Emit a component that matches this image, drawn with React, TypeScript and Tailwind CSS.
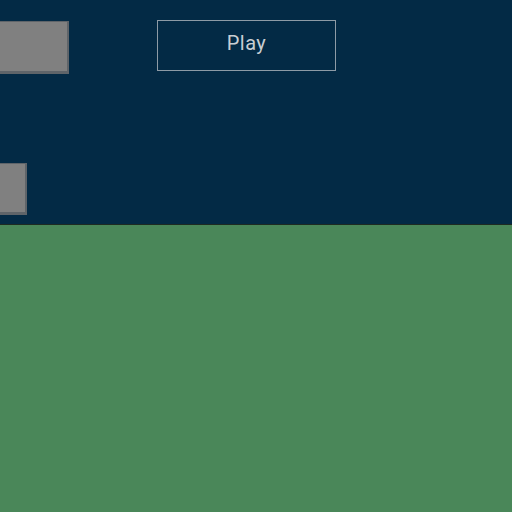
export default function App() {
  return (
    <div className="flex h-[512px] w-[512px] flex-col overflow-hidden" style={{ fontFamily: 'Roboto, "Liberation Sans", sans-serif' }}>
      {/* Top panel */}
      <div className="flex h-[224px] flex-col bg-[#032a45] pt-[20px]">
        <div className="flex items-start">
          <div className="mt-[1px] h-[53px] w-[69px] border-t border-r-2 border-b-[3px] border-[#5f6469] bg-[#808080]" />
          <button className="ml-[88px] flex h-[51px] w-[179px] items-center justify-center border border-[#8e9ba6] pb-[6px] text-[20px] tracking-[0.5px] text-[#c9ced3]">
            Play
          </button>
        </div>
        <div className="mt-[89px] h-[52px] w-[27px] border-t border-r-2 border-b-[3px] border-[#5f6469] bg-[#808080]" />
      </div>
      <div className="h-[1px] bg-[#1e2b22]" />
      <div className="flex-1 bg-[#4a8759]" />
    </div>
  );
}
